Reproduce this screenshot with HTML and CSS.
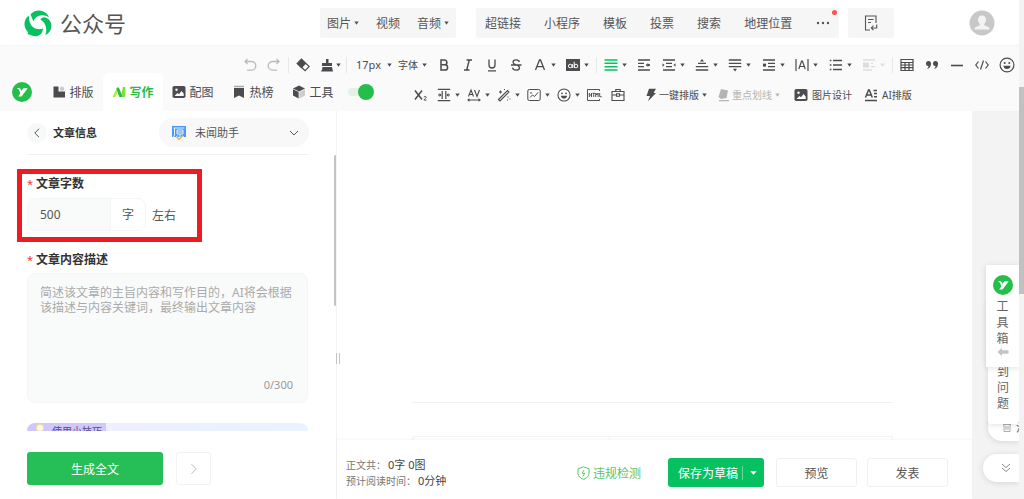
FILE: index.html
```html
<!DOCTYPE html>
<html lang="zh-CN">
<head>
<meta charset="utf-8">
<title>公众号</title>
<link rel="stylesheet" href="styles.css">
</head>
<body>
<svg class="defs" aria-hidden="true">
  <symbol id="caret" viewBox="0 0 5 4"><path d="M.3.5h4.400L2.500 3.700z" fill="currentColor"/></symbol>
  <symbol id="yi" viewBox="0 0 20 20"><circle cx="10" cy="10" r="10" fill="#26be4b"/><path d="M4.800 6.200C8 5.600 8.800 6.800 9.200 8.800L11.500 6.200h4.200L9.500 14.500H6.200L8.200 11.500C7.800 8.800 7 7 4.800 6.200z" fill="#fff"/></symbol>
  <symbol id="smile" viewBox="0 0 16 16"><circle cx="8" cy="8" r="6.900" fill="none" stroke="currentColor" stroke-width="1.200"/><circle cx="5.700" cy="6" r="1" fill="currentColor"/><circle cx="10.300" cy="6" r="1" fill="currentColor"/><path d="M4.500 8.800h7c0 4.300-7 4.300-7 0z" fill="currentColor"/></symbol>
  <symbol id="picture" viewBox="0 0 14 14"><rect x=".5" y="1" width="13" height="12" rx="1.800" fill="currentColor"/><circle cx="4.500" cy="4.800" r="1.200" fill="#fff"/><path d="M2.500 11l3-3 1.500 1.200L9.500 6l2.200 2.500V11z" fill="#fff"/></symbol>
</svg>
<div class="window">
<div class="app">
  <header class="header">
    <a class="brand" href="#">
      <svg width="28" height="28" viewBox="0 0 28 28" fill="#07c160"><path d="M6.500 5.500C10.500.3 18 .2 22.500 4.600c1.200 1.100 2 2.300 2.500 3.700-3.500-2.600-8-2.700-11.500-.8-1.800 1-3.300 2.600-4.200 4.700C8.200 9.500 7.500 8 6.500 5.500z"/><path d="M20.500 8.200c6.500 1.300 8.500 8.300 5.700 13.300-1.200 2.200-2.700 3.700-4.900 4.600 1.600-4.200 1.200-8.600-1-11.900-1-1.600-2.300-2.800-4-3.700 1-1.500 2.500-2.300 4.200-2.300z"/><path d="M5 6.500C4.500 13 7.500 18.500 12.300 19.800c2.300.7 4.700.6 6.700-.2-.2 4-2.500 7.200-6.300 7.600-1.800.2-3.500-.1-4.900-.7L3.500 25l.6-1.800C-1 18.500-.8 10.500 5 6.500z"/></svg>
      <span>公众号</span>
    </a>
    <nav class="insert">
      <div class="insert-group media">
        <button>图片<svg class="caret"><use href="#caret"/></svg></button>
        <button>视频</button>
        <button>音频<svg class="caret"><use href="#caret"/></svg></button>
      </div>
      <div class="insert-group links">
        <button>超链接</button><button>小程序</button><button>模板</button><button>投票</button><button>搜索</button><button>地理位置</button>
        <button class="more" aria-label="更多"><svg width="14" height="4" viewBox="0 0 14 4"><circle cx="2" cy="2" r="1.200" fill="#555"/><circle cx="7" cy="2" r="1.200" fill="#555"/><circle cx="12" cy="2" r="1.200" fill="#555"/></svg></button>
        <i class="dot"></i>
      </div>
      <button class="insert-group import" aria-label="导入"><svg width="14" height="16" viewBox="0 0 14 16" fill="none" stroke="#555" stroke-width="1.100"><path d="M6 15H1.500V1h10.500v7M4 4.500h5.500M4 7.500h3M12.700 9.500v3.500H7.500M9.500 10.500L7.300 13l2.200 2.200"/></svg></button>
    </nav>
    <svg class="avatar" width="26" height="26" viewBox="0 0 26 26"><circle cx="13" cy="13" r="12.500" fill="#c8c8c8"/><path d="M13 5.500c2.600 0 4 1.900 4 4.300 0 1.700-.8 3.200-1.800 4.200v1.300l4.300 2c.8.400 1 1 1 2.200h-15c0-1.200.2-1.800 1-2.200l4.300-2V14C9.800 13 9 11.500 9 9.800c0-2.400 1.400-4.300 4-4.300z" fill="#f4f4f4"/></svg>
  </header>

  <div class="toolbar">
    <div class="tools first">
      <div class="group">
        <button class="tool light" aria-label="撤销"><svg viewBox="0 0 14 14" class="line"><path d="M4.500 1L2 3.500 4.500 6M2 3.500h6.500a4.300 4.300 0 010 8.600H4" stroke-width="1.300"/></svg></button>
        <button class="tool light" aria-label="重做"><svg viewBox="0 0 14 14" class="line"><path d="M9.500 1L12 3.500 9.500 6M12 3.500H5.500a4.300 4.300 0 000 8.600H10" stroke-width="1.300"/></svg></button>
      </div>
      <i class="sep"></i>
      <div class="group">
        <button class="tool" aria-label="清除格式"><svg viewBox="0 0 14 14"><path d="M5.500.3L.3 5.500l5 5 5.200-5.200z" fill="currentColor"/><path d="M9.800 5.300l3.300 3.300-4 4L5.800 9.500" class="line" stroke-width="1.200"/></svg></button>
        <button class="tool drop brush" aria-label="格式刷"><svg viewBox="0 0 14 14"><path d="M6 1h2.500v4H12v3H2V5h4zM2.500 9H12l1 4.500H.8C1.800 12.500 2.300 11 2.500 9z" fill="currentColor"/></svg><svg class="caret"><use href="#caret"/></svg></button>
      </div>
      <i class="sep"></i>
      <div class="group">
        <button class="tool size">17px<svg class="caret"><use href="#caret"/></svg></button>
        <button class="tool face">字体<svg class="caret"><use href="#caret"/></svg></button>
        <button class="tool" aria-label="加粗"><svg viewBox="0 0 14 14" class="line"><path d="M4 2h3.500a2.400 2.400 0 010 4.800H4zM4 6.800h4a2.600 2.600 0 010 5.200H4z" stroke-width="1.500"/></svg></button>
        <button class="tool" aria-label="斜体"><svg viewBox="0 0 14 14" class="line"><path d="M5.500 2H11M3 12h5.500M8.300 2L5.700 12" stroke-width="1.400"/></svg></button>
        <button class="tool" aria-label="下划线"><svg viewBox="0 0 14 14" class="line"><path d="M4 1.500V7a3 3 0 006 0V1.500M3 12.800h8" stroke-width="1.300"/></svg></button>
        <button class="tool" aria-label="删除线"><svg viewBox="0 0 14 14" class="line"><path d="M10.300 4C10 1 4 1 4 4.300 4 7 10.500 6.500 10.500 9.700c0 3.300-6.500 3.300-7 0M2 7h10.500" stroke-width="1.300"/></svg></button>
        <button class="tool drop" aria-label="字体颜色"><svg viewBox="0 0 14 14" class="line"><path d="M2.500 12L6.500 2h1l4 10M4 8.700h6" stroke-width="1.300"/></svg><svg class="caret"><use href="#caret"/></svg></button>
        <button class="tool drop" aria-label="背景色"><svg viewBox="0 0 14 14"><path d="M0 1h14v12H0z" fill="currentColor"/><g fill="none" stroke="#fff" stroke-width="1"><circle cx="4.200" cy="8" r="1.800"/><path d="M6.300 6v4M8.200 3.800V10"/><circle cx="10" cy="8" r="1.800"/></g></svg><svg class="caret"><use href="#caret"/></svg></button>
      </div>
      <i class="sep"></i>
      <div class="group grow">
        <button class="tool drop" aria-label="对齐"><svg viewBox="0 0 14 14" class="line green"><path d="M.5 2h13M.5 5.300h13M.5 8.700h13M.5 12h13" stroke-width="1.400"/></svg><svg class="caret"><use href="#caret"/></svg></button>
        <button class="tool" aria-label="首行缩进"><svg viewBox="0 0 14 14" class="line"><path d="M1 2h12M1 5.300h6M1 8.700h6M1 12h12M9 7h4" stroke-width="1.300"/><path d="M10.500 5v4l2.500-2z" fill="currentColor" stroke="none"/></svg></button>
        <button class="tool drop" aria-label="两端缩进"><svg viewBox="0 0 14 14" class="line"><path d="M1 2h12M4 5.300h6M4 8.700h6M1 12h12" stroke-width="1.300"/><path d="M.5 5.300v3.400L2.500 7zM13.500 5.300v3.400L11.500 7z" fill="currentColor" stroke="none"/></svg><svg class="caret"><use href="#caret"/></svg></button>
        <button class="tool drop" aria-label="段前距"><svg viewBox="0 0 14 14" class="line"><path d="M3 5.300h8M.8 8.700h12.400M.8 12h12.400" stroke-width="1.300"/><path d="M5 3.500h4L7 1z" fill="currentColor" stroke="none"/></svg><svg class="caret"><use href="#caret"/></svg></button>
        <button class="tool drop" aria-label="段后距"><svg viewBox="0 0 14 14" class="line"><path d="M.8 2h12.400M.8 5.300h12.400M.8 8.700h12.400" stroke-width="1.300"/><path d="M5 10.700h4L7 13.500z" fill="currentColor" stroke="none"/></svg><svg class="caret"><use href="#caret"/></svg></button>
        <button class="tool drop" aria-label="行间距"><svg viewBox="0 0 14 14" class="line"><path d="M1 2h12M6 5.300h7M6 8.700h7M1 12h12" stroke-width="1.300"/><path d="M1 5.600h3v3H1z" fill="currentColor" stroke="none"/></svg><svg class="caret"><use href="#caret"/></svg></button>
        <button class="tool drop" aria-label="字间距"><svg viewBox="0 0 14 14" class="line"><path d="M1 1v12M13 1v12M3.800 11L6.600 3h.8l2.800 8M5 8.500h4" stroke-width="1.200"/></svg><svg class="caret"><use href="#caret"/></svg></button>
        <button class="tool drop" aria-label="列表"><svg viewBox="0 0 14 14" class="line"><path d="M4 2.500h9M4 7h9M4 11.500h9M.8 2.500h1.600M.8 7h1.600M.8 11.500h1.600" stroke-width="1.300"/></svg><svg class="caret"><use href="#caret"/></svg></button>
        <button class="tool drop faint" aria-label="图文环绕"><svg viewBox="0 0 14 14" class="line"><path d="M1 2h12M9 5.300h2M9 8.700h4M1 12h9" stroke-width="1.300"/><path d="M1 4.500h6v5H1z" fill="currentColor" stroke="none"/></svg><svg class="caret"><use href="#caret"/></svg></button>
      </div>
      <i class="sep"></i>
      <div class="group spaced">
        <button class="tool" aria-label="表格"><svg viewBox="0 0 14 14" class="line"><path d="M1 1.500h12v11H1zM1 4.500h12M1 7h12M1 9.700h12M5 4.500v8M9 4.500v8" stroke-width="1.200"/></svg></button>
        <button class="tool" aria-label="引用"><svg viewBox="0 0 14 14"><path d="M1 5.500a2.500 2.500 0 015 0c0 3-1.300 5-4 5.500 1-1 1.500-2 1.500-3A2.500 2.500 0 011 5.500zM8 5.500a2.500 2.500 0 015 0c0 3-1.300 5-4 5.500 1-1 1.500-2 1.500-3A2.500 2.500 0 018 5.500z" fill="currentColor"/></svg></button>
        <button class="tool" aria-label="分割线"><svg viewBox="0 0 14 14" class="line"><path d="M1 7.500h12" stroke-width="1.600"/></svg></button>
        <button class="tool" aria-label="代码"><svg viewBox="0 0 14 14" class="line"><path d="M3.500 3.500L.8 7l2.700 3.500M10.500 3.500L13.200 7l-2.700 3.500M8.500 2.500l-3 9" stroke-width="1.200"/></svg></button>
        <button class="tool big" aria-label="表情"><svg><use href="#smile"/></svg></button>
      </div>
    </div>

    <div class="second">
      <nav class="tabs">
        <svg class="logo" width="20" height="20"><use href="#yi"/></svg>
        <button class="tab"><svg viewBox="0 0 14 14"><path d="M1.500 1.500h5v5H13v6H1.500z" fill="currentColor"/><circle cx="10" cy="3.700" r="2.200" fill="#ccc"/></svg>排版</button>
        <button class="tab active"><svg viewBox="0 0 14 14"><path d="M.5 12L4.500 3.500C5 2.300 6.800 2.200 7.300 3.500L5 8.500 3.500 12z" fill="#b4ee3c"/><path d="M4.500 3.500C5 2.300 6.800 2.200 7.300 3.500L10.800 12H8.500C7.500 12 7 11.500 6.700 10.500z" fill="#26be4b"/><path d="M11 2h2.300v8.500c0 1-.6 1.500-1.500 1.500H10.800L9.500 8.800z" fill="#7ddf34"/></svg>写作</button>
        <button class="tab"><svg><use href="#picture"/></svg>配图</button>
        <button class="tab"><svg viewBox="0 0 14 14"><path d="M2 1.500h10" stroke="#aaa" stroke-width="1.500"/><path d="M2 3h10v10L7 10.500 2 13z" fill="currentColor"/></svg>热榜</button>
        <button class="tab"><svg viewBox="0 0 14 14"><path d="M7 .5l6 3-6 3-6-3z" fill="currentColor"/><path d="M1 4.300l5.600 2.800v6.400L1 10.500z" fill="currentColor"/><path d="M13 4.300L7.400 7.100v6.400l5.600-3z" fill="#ccc"/></svg>工具</button>
        <input class="toggle" type="checkbox" role="switch" checked aria-label="启用">
      </nav>
      <div class="tools extra">
        <button class="tool" aria-label="下标"><svg viewBox="0 0 14 14" class="line"><path d="M2 2.500l7 9M9 2.500l-7 9" stroke-width="1.500"/><path d="M11 9.300c0-1.300 2.300-1.300 2.300 0 0 1-2.300 1.500-2.300 2.800h2.600" stroke-width=".9"/></svg></button>
        <button class="tool drop" aria-label="页边距"><svg viewBox="0 0 14 14" class="line"><path d="M.8 1.300h12.400M.8 12.700h12.400M5.200 3v8M8.800 3v8M1 7h3M10 7h3" stroke-width="1.200"/><path d="M2.500 5v4l2-2zM11.500 5v4l-2-2z" fill="currentColor" stroke="none"/></svg><svg class="caret"><use href="#caret"/></svg></button>
        <button class="tool drop" aria-label="字距"><svg viewBox="0 0 14 14" class="line"><path d="M1.500 8.500L4 2l2.500 6.500M2.300 6.500h3.400M7.500 2L10 8.500 12.500 2M1 12h12" stroke-width="1.100"/><path d="M0 12l2.500-1.800v3.600zM14 12l-2.500-1.800v3.600z" fill="currentColor" stroke="none"/></svg><svg class="caret"><use href="#caret"/></svg></button>
        <button class="tool drop" aria-label="美化"><svg viewBox="0 0 14 14" class="line"><path d="M1.500 11.500l9-9 1.500 1.500-9 9zM2 4h3M3.500 2.500v3M11 8.500v1M10 12h1M12.500 11h1M7 1.500h1" stroke-width="1.100"/></svg><svg class="caret"><use href="#caret"/></svg></button>
        <button class="tool drop" aria-label="图表"><svg viewBox="0 0 14 14" class="line"><rect x=".8" y="1.500" width="12.400" height="11" rx="1.500"/><path d="M3 9.500l2.500-2.500 2 1.500 3.500-4M3 5h2"/></svg><svg class="caret"><use href="#caret"/></svg></button>
        <button class="tool drop" aria-label="表情包"><svg><use href="#smile"/></svg><svg class="caret"><use href="#caret"/></svg></button>
        <button class="tool big" aria-label="HTML"><svg viewBox="0 0 16 16" class="line"><path d="M13.500 4V2.500h-12v11h12V12M3.300 6v4M5.500 6v4M3.300 8h2.200M6.500 6.300h2.400M7.700 6.300V10M9.700 10V6l1.200 2 1.200-2v4M13.700 6v3.700h2" stroke-width=".95"/></svg></button>
        <button class="tool" aria-label="素材箱"><svg viewBox="0 0 14 14" class="line"><path d="M1 3.500h12v9H1zM4.800 3.500v-2h4.400v2M1 7h4.500M8.500 7H13M5.500 5.800h3v2.500h-3z" stroke-width="1.100"/></svg></button>
        <button class="tool text"><svg viewBox="0 0 14 14"><path d="M5 .8h7L9.500 5H12L4 13.300 6 8H2.500z" fill="currentColor"/></svg>一键排版<svg class="caret"><use href="#caret"/></svg></button>
        <button class="tool text muted"><svg viewBox="0 0 14 14"><path d="M4 1l7 1.500L9.500 10 4 11 1.500 9zM2 12h10v1.300H2z" fill="currentColor"/></svg>重点划线<svg class="caret"><use href="#caret"/></svg></button>
        <button class="tool text wide"><svg><use href="#picture"/></svg>图片设计</button>
        <button class="tool text wide"><svg viewBox="0 0 14 14" class="line"><path d="M1.500 9.500L4.500 2h.8l3 7.500M2.500 7h5M9.500 2.500H13M10 5.500h3M10 8.800h3M1 12.500h12" stroke-width="1.500"/></svg>AI排版</button>
      </div>
    </div>
  </div>

  <main class="main">
    <aside class="panel">
      <div class="panel-head">
        <button class="back" aria-label="返回"><svg width="8" height="10" viewBox="0 0 8 10"><path d="M6 .8L1.800 5 6 9.200" fill="none" stroke="#555"/></svg></button>
        <h1>文章信息</h1>
        <div class="picker">
          <svg class="picker-icon" width="14" height="14" viewBox="0 0 14 14"><path d="M0 0h14v11H0z" fill="#4b97f2"/><path d="M1.500 2h11M2.500 2v7L1 12M5 4h6v4H5zM5 6h6M8 8v4M5.500 9.500L4 11.500M10.500 9.500l1.500 2" stroke="#e8f3ff" fill="none"/><path d="M4.500 11L7 13.500 10.500 10" stroke="#f3b34c" stroke-width="1.500" fill="none"/></svg>
          <select aria-label="助手"><option>未闻助手</option></select>
          <svg class="picker-arrow" width="10" height="6" viewBox="0 0 10 6"><path d="M1 1l4 4 4-4" fill="none" stroke="#555"/></svg>
        </div>
      </div>
      <form class="form">
        <label class="label" for="count">文章字数</label>
        <div class="count-row">
          <div class="count-box"><input id="count" type="text" value="500"><span>字</span></div>
          <span>左右</span>
        </div>
        <label class="label" for="desc">文章内容描述</label>
        <div class="desc-box">
          <textarea id="desc" placeholder="简述该文章的主旨内容和写作目的，AI将会根据该描述与内容关键词，最终输出文章内容"></textarea>
          <span class="limit">0/300</span>
        </div>
        <div class="tips"><span><svg width="10" height="14" viewBox="0 0 10 14"><circle cx="5" cy="5" r="3.700" fill="#fffbe8" stroke="#f3d795"/></svg>使用小技巧</span></div>
        <i class="highlight"></i>
      </form>
      <i class="panel-scroll"></i>
      <div class="panel-foot">
        <button class="generate">生成全文</button>
        <button class="next" aria-label="下一步"><svg width="8" height="12" viewBox="0 0 8 12"><path d="M1.500 1.200L6.300 6l-4.800 4.800" fill="none" stroke="#bbb"/></svg></button>
      </div>
    </aside>

    <section class="editor">
      <i class="splitter"></i>
      <div class="paper"><div class="cells"><i></i><i></i></div></div>
      <footer class="footer">
        <div class="stats">
          <p>正文共：<b>0字 0图</b></p>
          <p>预计阅读时间：<b>0分钟</b></p>
        </div>
        <a class="check" href="#"><svg width="13" height="14" viewBox="0 0 13 14" fill="none" stroke="currentColor"><path d="M6.500.8l5.500 2v4.500c0 3-2.500 5-5.500 6-3-1-5.500-3-5.500-6V2.800z"/><path d="M7 4L5.200 7.300h2.600L6 10.300"/></svg>违规检测</a>
        <div class="actions">
          <div class="save"><button>保存为草稿</button><button class="save-more" aria-label="更多保存选项"><svg width="7" height="4" viewBox="0 0 7 4"><path d="M.3.3h6.400L3.500 3.800z" fill="#fff"/></svg></button></div>
          <button class="plain">预览</button>
          <button class="plain">发表</button>
        </div>
      </footer>
    </section>

    <aside class="rail">
      <button class="toolbox"><svg width="20" height="20"><use href="#yi"/></svg><span>工具箱</span><svg width="12" height="10" viewBox="0 0 12 10"><path d="M.5 5L5 .8v2.500h6.500v3.400H5v2.500z" fill="#c4c4c4"/></svg></button>
      <button class="question"><span>到问题</span></button>
      <button class="clear"><svg width="8" height="9" viewBox="0 0 8 9"><path d="M0 1.500h8M1 1.500v7h6v-7M3 3v4M5 3v4M3 .5h2" fill="none" stroke="#999" stroke-width=".8"/></svg><span>清</span></button>
      <button class="fold" aria-label="收起"><svg width="10" height="10" viewBox="0 0 10 10"><path d="M1 1l4 3.500L9 1M1 5l4 3.500L9 5" fill="none" stroke="#888"/></svg></button>
    </aside>
  </main>
</div>
<div class="scrollbar"><i></i></div>
</div>
</body>
</html>
```

FILE: styles.css
```css
* { box-sizing: border-box; }
body {
  margin: 0;
  font-family: "Noto Sans", "Noto Sans CJK SC", sans-serif;
  font-size: 12px;
  color: #555;
  background: #fff;
}
button, input, select, textarea { font: inherit; color: inherit; }
button { border: 0; padding: 0; background: none; white-space: nowrap; }
a { color: inherit; text-decoration: none; }
svg { flex: none; }
.defs { position: absolute; width: 0; height: 0; }
.window { display: flex; height: 100vh; overflow: hidden; }
.app { flex: 1; min-width: 0; display: flex; flex-direction: column; }
.scrollbar { width: 5px; background: #f3f3f3; padding-top: 87px; }
.scrollbar i { display: block; height: 207px; background: #c1c1c1; }

/* header */
.header { display: flex; align-items: center; height: 45px; padding: 0 24px; }
.brand { display: flex; align-items: center; gap: 8px; width: 296px; font-size: 22px; line-height: 30px; }
.insert { display: flex; gap: 9px; }
.insert-group { display: flex; align-items: center; height: 30px; background: #f6f6f6; border-radius: 2px; }
.insert-group button { display: flex; align-items: center; gap: 3px; }
.media { gap: 17px; padding: 0 7px; margin-right: 11px; }
.links { position: relative; gap: 23px; padding: 0 8px 0 9px; }
.links .more { padding: 8px 1px; }
.dot { position: absolute; top: 2px; right: 2px; width: 5px; height: 5px; border-radius: 50%; background: #fa5151; }
.import { width: 46px; justify-content: center; }
.avatar { margin-left: auto; }
.caret { width: 5px; height: 4px; }

/* toolbar */
.toolbar { background: #fafafa; border-top: 1px solid #f5f5f5; color: #4b4b50; }
.tools { display: flex; align-items: center; font-size: 11px; }
.first { height: 27px; padding: 11px 0 0 238px; }
.group { display: flex; align-items: center; }
.grow { flex: 1; justify-content: space-between; }
.spaced { gap: 1px; }
.tool { display: flex; align-items: center; gap: 4px; padding: 0 5px; height: 16px; line-height: 16px; }
.tool svg:not(.caret) { width: 14px; height: 14px; }
.tool.big { padding: 0 4px; }
.tool.big svg { width: 16px; height: 16px; }
.line { fill: none; stroke: currentColor; }
.green { color: #07c160; }
.light { color: #bbb; }
.faint { color: #ddd; }
.drop { padding-right: 5px; }
.brush { padding-right: 3px; gap: 2px; }
.sep { width: 1px; height: 16px; margin: 0 2px; background: #e8e8e8; }
.size { padding: 0 6px 0 7px; gap: 6px; }
.face { font-size: 10px; padding: 0 5px 0 0; }
.second { display: flex; height: 38px; }
.tabs { display: flex; align-items: center; padding-left: 12px; width: 408px; }
.logo { margin-right: 11px; }
.tab { display: flex; align-items: center; justify-content: center; gap: 3px; width: 60px; height: 38px; }
.tab svg { width: 14px; height: 14px; }
.tab.active { background: #fff; border-radius: 6px 6px 0 0; color: #26be4b; font-weight: bold; }
.toggle { appearance: none; position: relative; width: 26px; height: 16px; margin: 0 0 0 5px; }
.toggle::before { content: ""; position: absolute; inset: 4px 10px 4px 0; border-radius: 4px; background: #e3f1e7; }
.toggle::after { content: ""; position: absolute; right: 0; top: 0; width: 16px; height: 16px; border-radius: 50%; background: #26be4b; }
.extra { padding-top: 6px; font-size: 10px; }
.extra .drop { padding-right: 2px; }
.tool.text { padding: 0 2px 0 14px; gap: 1px; }
.tool.text .caret { margin-left: 2px; }
.tool.text.wide { padding: 0 0 0 12px; gap: 4px; }
.tool.text.muted { padding-left: 8px; color: #b4b4b4; }

/* left panel */
.main { flex: 1; min-height: 0; display: flex; }
.panel { position: relative; width: 337px; border-right: 1px solid #f3f3f3; display: flex; flex-direction: column; }
.panel-head { display: flex; align-items: center; height: 44px; margin: 0 27px; border-bottom: 1px solid #f1f1f1; }
.back { display: flex; align-items: center; justify-content: center; width: 20px; height: 20px; border-radius: 50%; background: #f6f9f8; }
h1 { flex: 1; margin: 0 0 0 6px; font-size: 11px; line-height: 16px; color: #333; }
.picker { position: relative; width: 150px; }
.picker select { appearance: none; width: 100%; height: 29px; padding: 0 24px 0 36px; border: 0; border-radius: 15px; background: #f8f8f8; font-size: 11px; }
.picker-icon { position: absolute; left: 13px; top: 8px; }
.picker-arrow { position: absolute; right: 10px; top: 12px; }
.form { position: relative; flex: 1; min-height: 0; overflow: hidden; padding: 21px 28px 0 27px; }
.label { display: block; line-height: 16px; font-weight: bold; color: #333; }
.label::before { content: "*"; color: #f33; margin-right: 3px; font-size: 11px; font-weight: normal; }
.count-row { display: flex; align-items: center; gap: 6px; margin: 6px 0 21px; }
.count-box { display: flex; width: 119px; height: 33px; border: 1px solid #f4f6f5; border-radius: 8px; overflow: hidden; }
.count-box input { width: 82px; border: 0; padding: 0 12px; background: #f9fbfa; }
.count-box span { flex: 1; text-align: center; line-height: 31px; border-left: 1px solid #f4f6f5; }
.desc-box { position: relative; height: 130px; margin-top: 5px; }
.desc-box textarea { display: block; width: 100%; height: 100%; padding: 11px 12px; resize: none; border: 1px solid #f4f6f5; border-radius: 8px; background: #f9fbfa; line-height: 15px; outline: 0; }
.desc-box textarea::placeholder { color: #aaa; }
.limit { position: absolute; right: 15px; bottom: 10px; font-size: 11px; line-height: 16px; color: #999; }
.tips { height: 28px; margin-top: 20px; border-radius: 8px; overflow: hidden; font-size: 10px; line-height: 16px; color: #5b4a8f; background: linear-gradient(90deg, #f0edff, #e9f4ff); }
.tips span { display: flex; gap: 7px; width: 79px; height: 28px; padding-left: 8px; background: #d0c8fb; }
.highlight { position: absolute; left: 17px; top: 14px; width: 185px; height: 73px; border: 5px solid #ed1c24; }
.panel-scroll { position: absolute; right: 0; top: 44px; width: 2px; height: 151px; background: #c4c4c4; border-radius: 1px; }
.panel-foot { display: flex; gap: 13px; padding: 21px 27px 14px; }
.generate { width: 136px; height: 33px; border-radius: 3px; background: #26be57; color: #fff; }
.next { display: flex; align-items: center; justify-content: center; width: 35px; height: 33px; border: 1px solid #f3f3f3; border-radius: 3px; }

/* editor */
.editor { position: relative; flex: 1; min-width: 0; display: flex; flex-direction: column; }
.splitter { position: absolute; left: -1px; top: 242px; width: 4px; height: 11px; border: solid #c4c4c4; border-width: 0 1px; }
.paper { flex: 1; display: flex; flex-direction: column; justify-content: flex-end; margin: 0 79px 0 75px; }
.cells { display: flex; padding-top: 33px; border-top: 1px solid #f0f0f0; }
.cells i { height: 4px; border: solid #f3f3f3; border-width: 1px 1px 0 0; flex: 284; }
.cells i:first-child { flex: 197; border-left-width: 1px; border-radius: 3px 0 0; }
.footer { display: flex; align-items: center; height: 59px; padding: 6px 24px 0 9px; background: #fff; box-shadow: 0 -1px 2px rgba(0, 0, 0, .04); }
.stats { flex: 1; font-size: 10px; line-height: 16px; color: #777; }
.stats p { margin: 0; }
.stats b { margin-left: 2px; font-weight: normal; font-size: 11px; color: #444; }
.check { display: flex; align-items: center; gap: 3px; margin-right: 27px; color: #5cc468; }
.actions { display: flex; gap: 10px; }
.save { display: flex; margin-right: 2px; border-radius: 3px; background: #07c160; color: #fff; }
.save button { height: 29px; padding: 0 4px 0 10px; }
.save .save-more { display: flex; align-items: center; padding: 0 7px 0 0; }
.save-more::before { content: ""; width: 1px; height: 14px; margin-right: 7px; background: #6adba0; }
.plain { width: 81px; height: 29px; border: 1px solid #f0f0f0; border-radius: 3px; }

/* right rail */
.rail { display: flex; flex-direction: column; justify-content: flex-end; align-items: flex-end; width: 47px; padding-bottom: 17px; background: #f3f3f3; overflow: hidden; }
.rail button { display: flex; align-items: center; background: #fff; box-shadow: 0 1px 6px rgba(0, 0, 0, .12); color: #666; }
.rail .toolbox { position: relative; z-index: 3; flex-direction: column; width: 33px; height: 102px; padding-top: 10px; gap: 4px; }
.toolbox span, .question span { width: 12px; white-space: normal; line-height: 16px; }
.toolbox span { margin-bottom: -4px; }
.rail .question { position: relative; z-index: 2; width: 31px; height: 124px; margin-top: -67px; padding: 0 0 12px 9px; align-items: flex-end; border-radius: 3px; }
.rail .clear { width: 31px; height: 28px; margin-top: -11px; padding-left: 15px; gap: 5px; border-radius: 14px 0 0 14px; overflow: hidden; }
.rail .fold { width: 36px; height: 28px; margin-top: 13px; padding-left: 18px; border-radius: 14px 0 0 14px; }
```
